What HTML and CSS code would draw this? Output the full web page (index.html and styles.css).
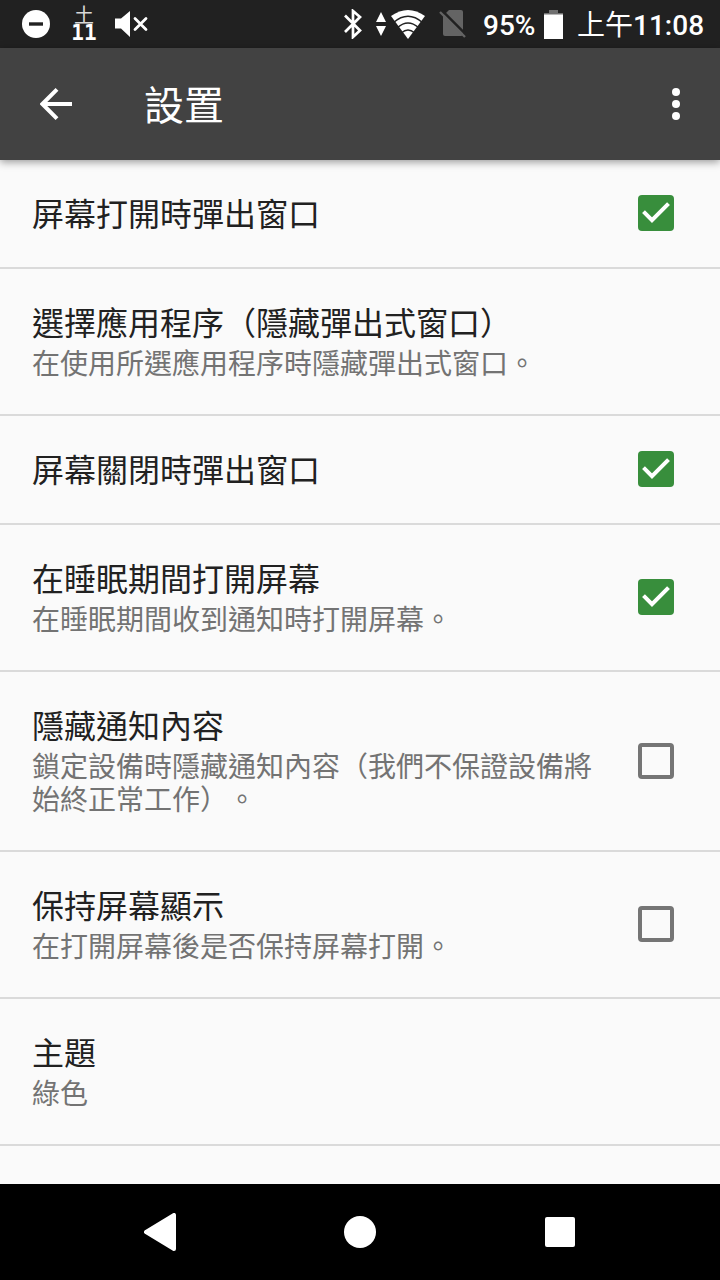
FILE: index.html
```html
<!DOCTYPE html>
<html lang="zh-Hant">
<head>
<meta charset="utf-8">
<title>設置</title>
<link rel="stylesheet" href="styles.css">
</head>
<body>
<div class="screen">
  <header class="status">
    <svg class="dnd" width="28" height="28" viewBox="0 0 28 28"><circle cx="14" cy="14" r="14" fill="#fff"/><path d="M7 14h14" stroke="#212121" stroke-width="3.4"/></svg>
    <div class="date"><span class="weekday">土</span><span class="day">11</span></div>
    <svg class="mute" width="33" height="26" viewBox="0 0 33 26"><path d="M0 7.500h6L15 0v26L6 17.500H0z" fill="#fff"/><path d="M20 7.500l11 11M31 7.500l-11 11" stroke="#fff" stroke-width="2.800" stroke-linecap="round"/></svg>
    <svg class="bluetooth" width="20" height="30" viewBox="0 0 20 30"><path d="M2 6.500l15 15L10 28V2l7 6-15 15" fill="none" stroke="#fff" stroke-width="2.700"/></svg>
    <svg class="traffic" width="10" height="24" viewBox="0 0 10 24"><path d="M5 0l5 10H0zM5 24L0 14h10z" fill="#fff"/></svg>
    <svg class="wifi" width="34" height="29" viewBox="0 0 34 29"><path d="M0 6Q17-6 34 6L17 29z" fill="#fff"/><path d="M2.500 12.500Q17 0 31.500 12.500M6.500 17.500Q17 8.500 27.500 17.500M10.500 22.800Q17 17 23.500 22.800" fill="none" stroke="#212121" stroke-width="1.400"/></svg>
    <svg class="sim" width="27" height="28" viewBox="0 0 27 28"><path d="M10 0h12a2 2 0 0 1 2 2v22a2 2 0 0 1-2 2H6a2 2 0 0 1-2-2V6z" fill="#646464"/><path d="M3 .5l24 24" stroke="#212121" stroke-width="2.500"/><path d="M1 2l25 25" stroke="#646464" stroke-width="2.300"/></svg>
    <span class="percent">95%</span>
    <svg class="battery" width="19" height="29" viewBox="0 0 19 29"><path d="M5 0h9v3h5v3H0V3h5z" fill="#707070"/><path d="M0 4.500h19V29H0z" fill="#fff"/></svg>
    <span class="clock"><span class="meridiem">上午</span>11:08</span>
  </header>
  <nav class="toolbar">
    <svg width="32" height="32" viewBox="0 0 32 32"><path d="M32 16H3M17 1.400L2.400 16 17 30.600" fill="none" stroke="#fff" stroke-width="4"/></svg>
    <h1 class="heading">設置</h1>
    <svg class="more" width="8" height="32" viewBox="0 0 8 32" fill="#fff"><circle cx="4" cy="4" r="4"/><circle cx="4" cy="16" r="4"/><circle cx="4" cy="28" r="4"/></svg>
  </nav>
  <main class="list">
    <section class="row"><div class="text"><div class="title">屏幕打開時彈出窗口</div></div>
      <svg class="check" viewBox="0 0 36 36"><rect width="36" height="36" rx="4" fill="#388e3c"/><path d="M5.500 16.700l8.500 8.500L30.500 8.700" fill="none" stroke="#fff" stroke-width="4"/></svg></section>
    <section class="row"><div class="text"><div class="title">選擇應用程序（隱藏彈出式窗口）</div><div class="summary">在使用所選應用程序時隱藏彈出式窗口。</div></div></section>
    <section class="row"><div class="text"><div class="title">屏幕關閉時彈出窗口</div></div>
      <svg class="check" viewBox="0 0 36 36"><rect width="36" height="36" rx="4" fill="#388e3c"/><path d="M5.500 16.700l8.500 8.500L30.500 8.700" fill="none" stroke="#fff" stroke-width="4"/></svg></section>
    <section class="row"><div class="text"><div class="title">在睡眠期間打開屏幕</div><div class="summary">在睡眠期間收到通知時打開屏幕。</div></div>
      <svg class="check" viewBox="0 0 36 36"><rect width="36" height="36" rx="4" fill="#388e3c"/><path d="M5.500 16.700l8.500 8.500L30.500 8.700" fill="none" stroke="#fff" stroke-width="4"/></svg></section>
    <section class="row"><div class="text"><div class="title">隱藏通知內容</div><div class="summary">鎖定設備時隱藏通知內容（我們不保證設備將<br>始終正常工作）。</div></div><span class="check empty"></span></section>
    <section class="row"><div class="text"><div class="title">保持屏幕顯示</div><div class="summary">在打開屏幕後是否保持屏幕打開。</div></div><span class="check empty"></span></section>
    <section class="row"><div class="text"><div class="title">主題</div><div class="summary">綠色</div></div></section>
  </main>
  <footer class="navbar">
    <svg class="back" width="33" height="38" viewBox="0 0 33 38"><path d="M2 19L30 2v34z" fill="#fff" stroke="#fff" stroke-width="4" stroke-linejoin="round"/></svg>
    <span class="home"></span>
    <span class="recents"></span>
  </footer>
</div>
</body>
</html>
```
FILE: styles.css
```css
* { box-sizing: border-box; }
body { margin: 0; font-family: Roboto, "Noto Sans CJK TC", sans-serif; text-spacing-trim: space-all; }
svg { display: block; flex: none; }
.screen { width: 720px; height: 1280px; display: flex; flex-direction: column; overflow: hidden; background: #fafafa; }

.status { height: 48px; flex: none; display: flex; align-items: center; padding: 0 16px 0 22px; background: #212121; color: #fff; white-space: nowrap; }
.date { width: 28px; height: 48px; padding-top: 5px; margin-left: 20px; display: flex; flex-direction: column; align-items: center; }
.weekday { font-family: "Noto Sans CJK JP", sans-serif; font-size: 20px; line-height: 20px; font-weight: 400; color: #d8d8d8; }
.day { margin-top: -1px; font-family: "DejaVu Sans Mono", monospace; font-size: 21px; line-height: 19px; font-weight: 700; }
.mute { margin-left: 17px; }
.bluetooth { margin-left: auto; }
.traffic { margin-left: 13px; }
.wifi { margin-left: 5px; }
.sim { margin-left: 14px; }
.percent { width: 53px; margin-left: 16px; padding: 2px 0 0 1px; font-size: 28px; font-weight: 500; line-height: 48px; }
.battery { margin-left: 9px; }
.clock { width: 127px; margin-left: 14px; padding-top: 2px; font-size: 28px; font-weight: 500; line-height: 48px; }
.clock, .percent { height: 48px; }
.meridiem { font-weight: 400; }

.toolbar { position: relative; height: 112px; flex: none; display: flex; align-items: center; padding: 0 40px; background: #424242; color: #fff; box-shadow: 0 2px 8px rgba(0, 0, 0, 0.4); }
.heading { margin: 6px 0 0 72px; font-size: 40px; font-weight: 400; line-height: 48px; }
.more { margin-left: auto; }

.list { flex: 1; min-height: 0; overflow: hidden; }
.row { display: flex; align-items: center; justify-content: space-between; padding: 33px 46px 33px 32px; border-bottom: 2px solid #dadada; }
.title { padding-top: 4px; font-size: 32px; line-height: 37px; color: #212121; white-space: nowrap; }
.summary { margin-top: 5px; font-size: 28px; line-height: 33px; color: #737373; white-space: nowrap; }
.check { width: 36px; height: 36px; flex: none; margin-bottom: 0.5px; }
.empty { border: 4px solid #757575; border-radius: 4px; }

.navbar { height: 96px; flex: none; display: flex; align-items: center; padding-left: 144px; background: #000; }
.home { width: 32px; height: 32px; margin-left: 167px; border-radius: 50%; background: #fff; }
.recents { width: 30px; height: 30px; margin-left: 169px; border-radius: 2px; background: #fff; }
```
